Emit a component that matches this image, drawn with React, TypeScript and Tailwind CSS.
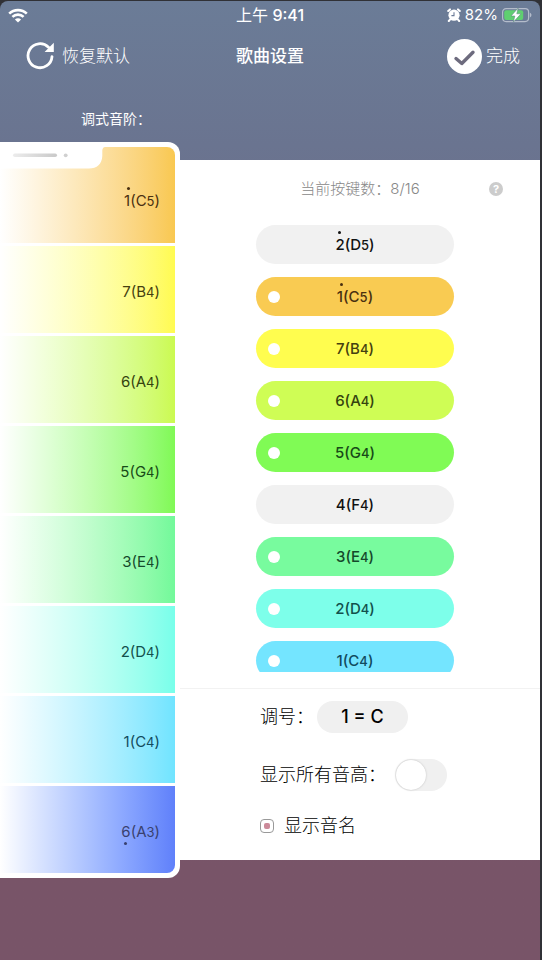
import { useState } from "react";

type Note = {
  degree: string;
  pitch: string;
  octave: string;
  dot?: "above" | "below";
  fill: string;
  fade: string;
  ink: string;
};

const KEYBOARD: Note[] = [
  { degree: "2", pitch: "D", octave: "5", dot: "above", fill: "bg-[#f9a552]", fade: "to-[#f9a552]", ink: "text-[#111111]" },
  { degree: "1", pitch: "C", octave: "5", dot: "above", fill: "bg-[#f9cb52]", fade: "to-[#f9c850]", ink: "text-[#4a3010]" },
  { degree: "7", pitch: "B", octave: "4", fill: "bg-[#fffd4f]", fade: "to-[#fffb50]", ink: "text-[#454010]" },
  { degree: "6", pitch: "A", octave: "4", fill: "bg-[#cffd55]", fade: "to-[#cbfa50]", ink: "text-[#34430f]" },
  { degree: "5", pitch: "G", octave: "4", fill: "bg-[#80fb55]", fade: "to-[#80f955]", ink: "text-[#174a18]" },
  { degree: "4", pitch: "F", octave: "4", fill: "bg-[#55fb63]", fade: "to-[#55fb63]", ink: "text-[#111111]" },
  { degree: "3", pitch: "E", octave: "4", fill: "bg-[#78fb9e]", fade: "to-[#72f99a]", ink: "text-[#15492b]" },
  { degree: "2", pitch: "D", octave: "4", fill: "bg-[#7dffea]", fade: "to-[#78ffea]", ink: "text-[#12504c]" },
  { degree: "1", pitch: "C", octave: "4", fill: "bg-[#74e5ff]", fade: "to-[#70e4ff]", ink: "text-[#124b5e]" },
];

const BASS: Note = { degree: "6", pitch: "A", octave: "3", dot: "below", fill: "bg-[#6283fb]", fade: "to-[#6080fa]", ink: "text-[#39416f]" };

const INITIAL = ["C5", "B4", "A4", "G4", "E4", "D4", "C4", "A3"];

const keyOf = (n: Note) => n.pitch + n.octave;

function NoteName({ note }: { note: Note }) {
  return (
    <span className={`text-[15px] leading-5 ${note.ink}`}>
      <span className="relative">
        {note.degree}
        {note.dot === "above" && (
          <span className="absolute -top-1 left-[3px] size-[3px] rounded-full bg-current" />
        )}
        {note.dot === "below" && (
          <span className="absolute -bottom-1 left-[3px] size-[3px] rounded-full bg-current" />
        )}
      </span>
      ({note.pitch}
      <span className="text-[13px]">{note.octave}</span>)
    </span>
  );
}

function StatusBar() {
  return (
    <div className="grid h-7 grid-cols-[1fr_auto_1fr] items-center px-2">
      <svg width="20" height="15" viewBox="0 0 20 15" fill="none" stroke="white" strokeWidth="2.6" aria-label="Wi-Fi">
        <path d="M1.2 5.6C6 0.9 14 0.9 18.8 5.6" />
        <path d="M4.4 8.9C7.5 5.9 12.5 5.9 15.6 8.9" />
        <path d="M10 14.6L6.9 11.5C8.6 9.8 11.4 9.8 13.1 11.5Z" fill="white" stroke="none" />
      </svg>
      <div className="text-[16px] leading-5">
        上午 <span className="font-medium">9:41</span>
      </div>
      <div className="flex items-center justify-end gap-1">
        <svg width="14" height="14" viewBox="0 0 14 14" aria-label="闹钟">
          <circle cx="7" cy="7.2" r="5.6" fill="white" />
          <path d="M1.2 3L3 1.4M12.8 3L11 1.4M3 11.6L1.8 13M11 11.6L12.2 13" stroke="white" strokeWidth="2" strokeLinecap="round" />
          <path d="M7 4.2V7.6H4.4" fill="none" stroke="#6b7b97" strokeWidth="1.1" />
        </svg>
        <span className="text-[15px] leading-5">82%</span>
        <svg width="30" height="16" viewBox="0 0 30 16" aria-label="正在充电">
          <rect x="0.6" y="1.6" width="26" height="13" rx="3.5" fill="none" stroke="#b4bccb" strokeWidth="1.2" />
          <path d="M27.8 5.8C30 6.4 30 9.8 27.8 10.4Z" fill="#b4bccb" />
          <rect x="2.2" y="3.2" width="19" height="9.8" rx="2" fill="#5fcf70" />
          <path d="M16.2 1L9 9H12.8L11.4 15L19 6.8H14.8Z" fill="white" stroke="#5f8f80" strokeWidth="0.6" />
        </svg>
      </div>
    </div>
  );
}

function NavBar() {
  return (
    <header className="grid h-[54px] grid-cols-[1fr_auto_1fr] items-center px-5">
      <button type="button" className="ml-1.5 flex items-center gap-2 justify-self-start font-light">
        <svg width="28" height="28" viewBox="0 0 28 28" fill="none" aria-hidden="true">
          <path d="M22.5 5.2A12 12 0 1 0 26 14.6" stroke="white" strokeWidth="2.8" strokeLinecap="round" />
          <path d="M27.8 0.8V10H18.6Z" fill="white" />
        </svg>
        <span className="text-[17px] leading-6">恢复默认</span>
      </button>
      <h1 className="text-[17px] leading-6 font-medium">歌曲设置</h1>
      <button type="button" className="flex items-center gap-1 justify-self-end font-light">
        <svg width="35" height="35" viewBox="0 0 35 35" fill="none" aria-hidden="true">
          <circle cx="17.5" cy="17.5" r="17.5" fill="white" />
          <path d="M9 19.5L14.8 24.5L26 13.2" stroke="#6d6b7e" strokeWidth="3.4" strokeLinecap="round" strokeLinejoin="round" />
        </svg>
        <span className="text-[17px] leading-6">完成</span>
      </button>
    </header>
  );
}

function PhonePreview({ notes }: { notes: Note[] }) {
  return (
    <aside className="relative z-10 w-[180px] shrink-0 rounded-r-xl bg-white py-[5px] pr-[5px]">
      <ul className="flex flex-col gap-[3px] overflow-hidden rounded-r-lg">
        {notes.map((note) => (
          <li
            key={keyOf(note)}
            className={`flex h-[87px] items-center justify-end bg-linear-to-r from-white pt-1 pr-[15px] first:h-24 first:pt-3 ${note.fade}`}
          >
            <NoteName note={note} />
          </li>
        ))}
      </ul>
      <svg className="absolute top-[5px] left-0" width="110" height="22" viewBox="0 0 110 22" aria-hidden="true">
        <defs>
          <linearGradient id="speaker" x1="0" x2="1" y1="0" y2="0">
            <stop offset="0" stopColor="#ececec" />
            <stop offset="1" stopColor="#c9c9c9" />
          </linearGradient>
        </defs>
        <path d="M0 0H106C103 0 102.5 1.5 102.3 4V9C102 17 97 21.5 89 21.5H0Z" fill="white" />
        <rect x="13" y="6.5" width="44" height="3.6" rx="1.8" fill="url(#speaker)" />
        <circle cx="65.7" cy="8.3" r="1.9" fill="#d0d0d0" />
      </svg>
    </aside>
  );
}

export default function App() {
  const [active, setActive] = useState<string[]>(INITIAL);
  const [allPitches, setAllPitches] = useState(false);
  const [showNames, setShowNames] = useState(true);

  const toggle = (key: string) =>
    setActive((cur) => (cur.includes(key) ? cur.filter((k) => k !== key) : [...cur, key]));

  return (
    <div className="min-h-screen bg-[#303136] pt-px pr-0.5 font-[Inter,'Noto_Sans_CJK_SC',sans-serif]">
      <div className="min-h-[calc(100vh-1px)] rounded-t-lg bg-linear-to-b from-[#6b7c97] via-[#6a7490] via-15% to-[#785468] to-90% text-white">
        <StatusBar />
        <NavBar />
        <p className="pt-[26px] pb-[13px] pl-[81px] text-[14px] leading-5">调式音阶：</p>

        <div className="flex items-start">
          <PhonePreview notes={[...KEYBOARD, BASS].filter((n) => active.includes(keyOf(n)))} />

          <main className="mt-[18px] min-w-0 flex-1 bg-white text-black">
            <div className="relative flex h-[58px] items-center justify-center text-[15px] leading-5 font-light text-[#888888]">
              <span>当前按键数：{active.length}/16</span>
              <button
                type="button"
                aria-label="帮助"
                className="absolute right-[37px] flex size-3.5 items-center justify-center rounded-full bg-[#cccccc] text-[11px] leading-none font-bold text-white"
              >
                ?
              </button>
            </div>

            <div className="flex h-[454px] flex-col gap-[13px] overflow-hidden pt-[7px] pr-[86px] pl-[76px]">
              {KEYBOARD.map((note) => {
                const on = active.includes(keyOf(note));
                return (
                  <button
                    key={keyOf(note)}
                    type="button"
                    aria-pressed={on}
                    onClick={() => toggle(keyOf(note))}
                    className={`relative flex h-[39px] shrink-0 items-center justify-center rounded-full font-medium ${on ? note.fill : "bg-[#f1f1f1]"}`}
                  >
                    {on && <span className="absolute left-3 size-3 rounded-full bg-white" />}
                    <NoteName note={note} />
                  </button>
                );
              })}
            </div>

            <div className="mt-4 border-t border-[#f2f2f2] pt-3 pb-5 pl-20 text-[18px] leading-7 font-light">
              <div className="flex items-center">
                <span>调号：</span>
                <button
                  type="button"
                  className="ml-[3px] h-8 w-[91px] rounded-full bg-[#f0f0f0] text-[18px] leading-7 font-medium"
                >
                  1 = C
                </button>
              </div>
              <div className="mt-[26px] flex items-center">
                <label htmlFor="all-pitches">显示所有音高：</label>
                <input
                  id="all-pitches"
                  type="checkbox"
                  role="switch"
                  checked={allPitches}
                  onChange={(e) => setAllPitches(e.target.checked)}
                  className="ml-[9px] h-8 w-[52px] appearance-none rounded-full bg-[#f0f0f0] p-px before:block before:size-[30px] before:rounded-full before:bg-white before:shadow-[0_0_2px_#bbbbbb] checked:bg-[#65d36e] checked:pl-[21px]"
                />
              </div>
              <div className="mt-[21px] flex items-center gap-2.5">
                <input
                  id="show-names"
                  type="checkbox"
                  checked={showNames}
                  onChange={(e) => setShowNames(e.target.checked)}
                  className="flex size-3.5 appearance-none items-center justify-center rounded border border-[#999999] bg-white checked:before:size-1.5 checked:before:rounded-xs checked:before:bg-[#cc8a9a]"
                />
                <label htmlFor="show-names">显示音名</label>
              </div>
            </div>
          </main>
        </div>
      </div>
    </div>
  );
}
